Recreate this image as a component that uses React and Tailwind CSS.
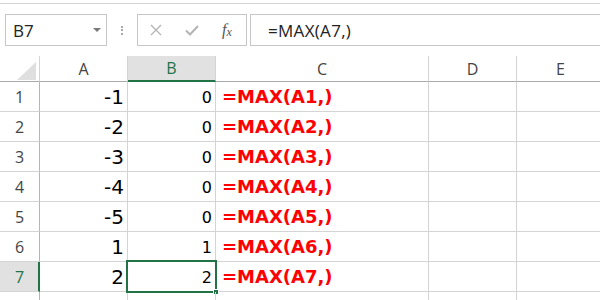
export default function App() {
  const rows = [
    [-1, 0],
    [-2, 0],
    [-3, 0],
    [-4, 0],
    [-5, 0],
    [1, 1],
    [2, 2],
  ];
  const cols = [
    { l: "A", w: "w-[88px]" },
    { l: "B", w: "w-[88px]", sel: true },
    { l: "C", w: "w-[213px]" },
    { l: "D", w: "w-[88px]" },
    { l: "E", w: "w-[88px]" },
  ];
  return (
    <div className="w-[600px] h-[300px] overflow-hidden bg-white relative font-['Open_Sans',sans-serif]">
      <div className="h-[3px]" />
      <div className="border-t border-[#d4d4d4]" />
      {/* toolbar */}
      <div className="flex pt-[10px] pl-[5px] h-[42px]">
        <div className="w-[102px] h-[32px] border border-[#c6c6c6] flex items-center pl-[7px] pr-[5px] justify-between">
          <span className="text-[17px] text-[#222] leading-none">B7</span>
          <svg width="8" height="5" viewBox="0 0 8 5">
            <path d="M0 0 L8 0 L4 4 Z" fill="#7a7a7a" />
          </svg>
        </div>
        <div className="w-[30px] h-[32px] flex flex-col items-center justify-center gap-[1.5px]">
          <div className="w-[2px] h-[2px] bg-[#a8a8a8]" />
          <div className="w-[2px] h-[2px] bg-[#a8a8a8]" />
          <div className="w-[2px] h-[2px] bg-[#a8a8a8]" />
        </div>
        <div className="w-[110px] h-[32px] border border-[#c6c6c6] flex items-center pl-[12px] gap-[23px]">
          <svg width="12" height="12" viewBox="0 0 12 12">
            <path d="M1 1 L11 11 M11 1 L1 11" stroke="#b4b4b4" strokeWidth="1.3" />
          </svg>
          <svg width="14" height="11" viewBox="0 0 14 11">
            <path d="M1 5.5 L5 9.5 L13 1" stroke="#b4b4b4" strokeWidth="2" fill="none" />
          </svg>
          <div className="flex font-['Liberation_Serif',serif] italic text-[#555]">
            <span className="text-[16px] leading-none">f</span>
            <span className="text-[12px] leading-none mt-[4px]">x</span>
          </div>
        </div>
        <div className="ml-[3px] flex-1 h-[32px] border-l border-t border-b border-[#c6c6c6] flex items-center pl-[17px]">
          <span className="text-[17px] text-[#222] leading-none tracking-[0.3px]">=MAX(A7,)</span>
        </div>
      </div>
      <div className="h-[10px]" />
      {/* column header */}
      <div className="flex h-[26px]">
        <div className="w-[40px] shrink-0 border-r border-b border-r-[#d4d4d4] border-b-[#ababab] flex items-end justify-end pr-[3px] pb-[1px]">
          <svg width="19" height="18" viewBox="0 0 19 18">
            <path d="M19 0 L19 18 L0 18 Z" fill="#dfdfdf" />
          </svg>
        </div>
        {cols.map((c) =>
          c.sel ? (
            <div
              key={c.l}
              className={`${c.w} shrink-0 bg-[#e1e1e1] border-r border-r-[#d4d4d4] border-b-2 border-b-[#217346] flex items-center justify-center text-[16px] text-[#217346]`}
            >
              {c.l}
            </div>
          ) : (
            <div
              key={c.l}
              className={`${c.w} shrink-0 border-r border-b border-r-[#d4d4d4] border-b-[#ababab] flex items-center justify-center text-[16px] text-[#444]`}
            >
              {c.l}
            </div>
          )
        )}
      </div>
      {/* body */}
      {[...rows, null].map((r, i) => {
        const n = i + 1;
        const sel = n === 7;
        return (
          <div key={n} className="flex h-[30px]">
            {sel ? (
              <div className="w-[40px] shrink-0 bg-[#e1e1e1] border-r-2 border-r-[#217346] border-b border-b-[#d4d4d4] flex items-center justify-center text-[16px] text-[#217346] pl-[1px]">
                {n}
              </div>
            ) : (
              <div className="w-[40px] shrink-0 border-r border-b border-r-[#b5b5b5] border-b-[#d4d4d4] flex items-center justify-center text-[16px] text-[#444]">
                {n}
              </div>
            )}
            <div className="w-[88px] shrink-0 border-r border-b border-[#d4d4d4] flex items-center justify-end pr-[3px] font-['DejaVu_Sans',sans-serif] text-[20px] text-black leading-none">
              {r ? r[0] : ""}
            </div>
            <div className="w-[88px] shrink-0 border-r border-b border-[#d4d4d4] flex items-center justify-end pr-[3px] pt-[2px] font-['DejaVu_Sans',sans-serif] text-[16px] text-black leading-none relative">
              {r ? r[1] : ""}
              {sel && (
                <>
                  <div className="absolute -left-[2px] -top-[2px] -right-[2px] -bottom-[2px] border-2 border-[#217346]" />
                  <div className="absolute -right-[4px] -bottom-[4px] w-[6px] h-[6px] bg-[#217346] border border-white" />
                </>
              )}
            </div>
            <div className="w-[213px] shrink-0 border-r border-b border-[#d4d4d4] flex items-center pl-[6px] font-['DejaVu_Sans',sans-serif] font-bold text-[18px] text-[#ff0000] leading-none">
              {r ? `=MAX(A${n},)` : ""}
            </div>
            <div className="w-[88px] shrink-0 border-r border-b border-[#d4d4d4]" />
            <div className="w-[88px] shrink-0 border-r border-b border-[#d4d4d4]" />
          </div>
        );
      })}
    </div>
  );
}
